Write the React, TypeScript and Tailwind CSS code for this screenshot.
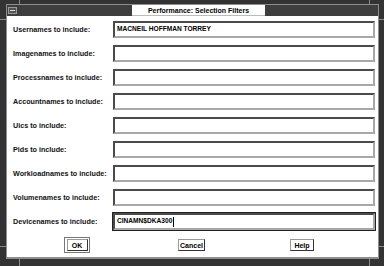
const fields = [
  { label: "Usernames to include:", value: "MACNEIL HOFFMAN TORREY" },
  { label: "Imagenames to include:", value: "" },
  { label: "Processnames to include:", value: "" },
  { label: "Accountnames to include:", value: "" },
  { label: "Uics to include:", value: "" },
  { label: "Pids to include:", value: "" },
  { label: "Workloadnames to include:", value: "" },
  { label: "Volumenames to include:", value: "" },
  { label: "Devicenames to include:", value: "CINAMN$DKA300", focused: true },
];

function Field({ label, value, focused }: { label: string; value: string; focused?: boolean }) {
  return (
    <div className="flex h-[17px] items-center">
      <span className="w-[100px] shrink-0 text-[7.2px] font-bold leading-none text-[#111]">{label}</span>
      <div
        className={`flex h-[17px] w-[262px] items-center border-2 border-t-[#4a4a4a] border-l-[#4a4a4a] border-b-[#a8a8a8] border-r-[#a8a8a8] bg-white pl-[2px] ${
          focused ? "outline outline-1 outline-[#222]" : ""
        }`}
      >
        <span className="text-[6.6px] font-bold leading-none text-black">{value}</span>
        {focused && <span className="ml-px h-[10px] w-px bg-black" />}
      </div>
    </div>
  );
}

function Button({ children, className = "" }: { children: string; className?: string }) {
  return (
    <div
      className={`flex h-[12px] items-center justify-center border border-t-[#9a9a9a] border-l-[#9a9a9a] border-b-[#333] border-r-[#333] bg-white px-[3px] text-[7px] font-bold leading-none text-black ${className}`}
    >
      {children}
    </div>
  );
}

export default function App() {
  return (
    <div className="relative h-[266px] w-[384px] overflow-hidden bg-[#333] pt-[4px] pr-[5px] pb-[7px] pl-[6px] font-['Liberation_Sans',Arial,sans-serif]">
      {/* corner resize marks */}
      <div className="absolute left-[19px] top-0 h-[5px] w-px bg-[#8a8a8a]" />
      <div className="absolute left-[369px] top-0 h-[5px] w-px bg-[#8a8a8a]" />
      <div className="absolute left-[19px] bottom-0 h-[8px] w-px bg-[#8a8a8a]" />
      <div className="absolute left-[369px] bottom-0 h-[8px] w-px bg-[#8a8a8a]" />
      <div className="absolute left-0 top-[19px] h-px w-[6px] bg-[#8a8a8a]" />
      <div className="absolute right-0 top-[19px] h-px w-[5px] bg-[#8a8a8a]" />
      <div className="absolute left-0 bottom-[19px] h-px w-[6px] bg-[#8a8a8a]" />
      <div className="absolute right-0 bottom-[19px] h-px w-[5px] bg-[#8a8a8a]" />

      <div className="flex h-full flex-col border border-[#8e8e8e] border-b-2">
        {/* Title bar */}
        <div className="flex h-[11px] shrink-0 items-stretch bg-[#3e3e3e]">
          <div className="ml-px mt-[2px] flex h-[7px] w-[9px] items-start justify-center border border-[#9a9a9a] bg-[#555]">
            <span className="mt-[2px] h-px w-[5px] bg-[#ddd]" />
          </div>
          <div className="ml-[115px] flex w-[133px] items-center justify-center border-b border-[#bbb] bg-white text-[7px] font-bold leading-none text-black">
            Performance: Selection Filters
          </div>
        </div>

        {/* Form */}
        <div className="flex flex-1 flex-col bg-white pt-[5px] pl-[6px]">
          <div className="flex flex-col gap-[7px]">
            {fields.map((f) => (
              <Field key={f.label} label={f.label} value={f.value} focused={f.focused} />
            ))}
          </div>

          <div className="mt-[7px] flex items-center">
            <div className="ml-[51px] flex h-[16px] w-[26px] items-center justify-center border border-[#777] bg-white">
              <Button className="w-[21px]">OK</Button>
            </div>
            <Button className="ml-[88px] w-[27px]">Cancel</Button>
            <Button className="ml-[85px] w-[24px]">Help</Button>
          </div>
        </div>
      </div>
    </div>
  );
}
